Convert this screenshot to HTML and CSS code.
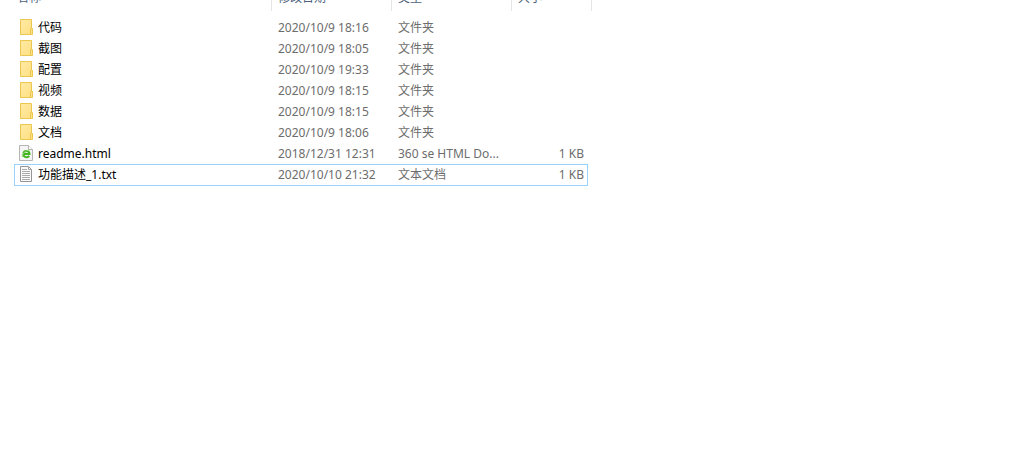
FILE: index.html
```html
<!DOCTYPE html>
<html lang="zh-CN">
<head>
<meta charset="utf-8">
<title>文件列表</title>
<link rel="stylesheet" href="styles.css">
</head>
<body>
<svg class="defs" aria-hidden="true">
  <defs>
    <linearGradient id="paper" x1="0" y1="0" x2="1" y2="1"><stop offset="0" stop-color="#ffeaa4"/><stop offset="1" stop-color="#ffdf82"/></linearGradient>
    <symbol id="folder" viewBox="0 0 16 16">
      <path d="M1.500.500h11v9h1v6h-12z" fill="url(#paper)" stroke="#ebc750"/>
      <path d="M11.500 15v-5.500h1" fill="none" stroke="#ebc750"/>
    </symbol>
    <symbol id="html" viewBox="0 0 16 16">
      <path d="M.500.500h9l4 4v11h-13z" fill="#f4f4f4" stroke="#b5b5b5"/>
      <path d="M9.500.500v4h4" fill="#fff" stroke="#b5b5b5"/>
      <path d="M4.500 9h6c0-4-6-4-6 .100 0 3.600 4.200 3.900 5.700 1.800" fill="none" stroke="#43b51f" stroke-width="2"/>
      <path d="M3.500 12C2.500 10 6 5.500 11 4.800" fill="none" stroke="#8fd574"/>
    </symbol>
    <symbol id="text" viewBox="0 0 16 16">
      <path d="M1.500.500h8l3 3v12h-11z" fill="#fafafa" stroke="#959595"/>
      <path d="M9.500.500v3h3" fill="none" stroke="#a5a5a5"/>
      <path d="M3 3.500h5M3 5.500h8M3 7.500h8M3 9.500h8M3 11.500h8M3 13.500h8" fill="none" stroke="#ababab"/>
    </symbol>
  </defs>
</svg>
<main class="explorer">
  <table class="files">
    <colgroup><col class="col-name"><col class="col-date"><col class="col-type"><col class="col-size"></colgroup>
    <thead>
      <tr><th><div class="head"><span>名称</span></div></th><th><div class="head"><span>修改日期</span></div></th><th><div class="head"><span>类型</span></div></th><th><div class="head head-last"><span>大小</span></div></th></tr>
    </thead>
    <tbody>
      <tr><td><div class="name"><svg class="icon"><use href="#folder"/></svg>代码</div></td><td>2020/10/9 18:16</td><td>文件夹</td><td class="size"></td></tr>
      <tr><td><div class="name"><svg class="icon"><use href="#folder"/></svg>截图</div></td><td>2020/10/9 18:05</td><td>文件夹</td><td class="size"></td></tr>
      <tr><td><div class="name"><svg class="icon"><use href="#folder"/></svg>配置</div></td><td>2020/10/9 19:33</td><td>文件夹</td><td class="size"></td></tr>
      <tr><td><div class="name"><svg class="icon"><use href="#folder"/></svg>视频</div></td><td>2020/10/9 18:15</td><td>文件夹</td><td class="size"></td></tr>
      <tr><td><div class="name"><svg class="icon"><use href="#folder"/></svg>数据</div></td><td>2020/10/9 18:15</td><td>文件夹</td><td class="size"></td></tr>
      <tr><td><div class="name"><svg class="icon"><use href="#folder"/></svg>文档</div></td><td>2020/10/9 18:06</td><td>文件夹</td><td class="size"></td></tr>
      <tr><td><div class="name"><svg class="icon"><use href="#html"/></svg>readme.html</div></td><td>2018/12/31 12:31</td><td>360 se HTML Do...</td><td class="size">1 KB</td></tr>
      <tr class="focused"><td><div class="name"><svg class="icon"><use href="#text"/></svg>功能描述_1.txt</div></td><td>2020/10/10 21:32</td><td>文本文档</td><td class="size">1 KB</td></tr>
    </tbody>
  </table>
</main>
</body>
</html>
```

FILE: styles.css
```css
body {
  margin: 0;
  background: #fff;
  color: #6d6d6d;
  font: 12px/20px "Noto Sans", "Noto Sans CJK SC", sans-serif;
}

.defs {
  position: absolute;
  width: 0;
  height: 0;
}

.explorer {
  padding: 0 14px;
}

.files {
  width: 574px;
  table-layout: fixed;
  border-collapse: separate;
  border-spacing: 0;
}

.col-name { width: 258px; }
.col-date { width: 120px; }
.col-type { width: 120px; }
.col-size { width: 76px; }

th {
  padding: 0 0 6px;
  font-weight: 400;
  text-align: left;
}

/* The header row is scrolled mostly out of view. */
.head {
  display: flex;
  align-items: flex-end;
  height: 11px;
  padding-left: 6px;
  padding-bottom: 3px;
  box-sizing: border-box;
  overflow: hidden;
  border-right: 1px solid #e5e5e5;
  color: #4c607a;
}

th:first-child .head {
  padding-left: 3px;
}

.head-last {
  margin-right: -4px;
}

td {
  height: 21px;
  padding: 0 0 0 6px;
  white-space: nowrap;
}

td:first-child {
  padding-left: 5px;
}

.name {
  display: flex;
  align-items: center;
  gap: 3px;
  color: #000;
}

.icon {
  width: 16px;
  height: 16px;
  margin-bottom: 2px;
}

.files .size {
  padding: 0 4px 0 0;
  text-align: right;
}

.focused td {
  height: 22px;
}

.focused {
  outline: 1px solid #99d1ff;
  outline-offset: -1px;
}
```
